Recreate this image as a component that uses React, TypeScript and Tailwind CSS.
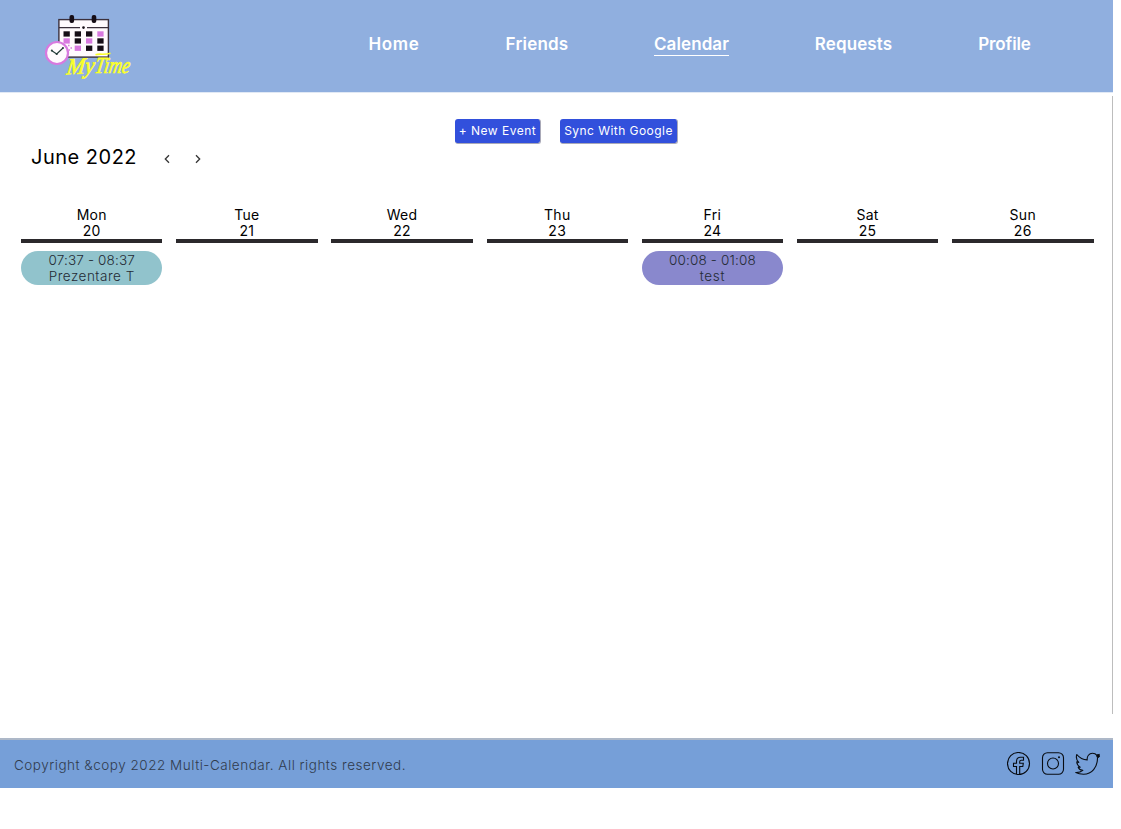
import React from 'react';

const nav = [
  { label: 'Home', box: 'w-[52px] tracking-[0.7px]' },
  { label: 'Friends', box: 'w-[62px] tracking-[0.2px]' },
  { label: 'Calendar', box: 'w-[75px] tracking-[0.1px]', active: true },
  { label: 'Requests', box: 'w-[77px] tracking-[0.1px]' },
  { label: 'Profile', box: 'w-[53px] tracking-[-0.1px]' },
];

const days = [
  { name: 'Mon', date: 20, event: { time: '07:37 - 08:37', title: 'Prezentare T', tone: 'bg-[#91c3cc]', spread: 'tracking-[0.5px]' } },
  { name: 'Tue', date: 21 },
  { name: 'Wed', date: 22 },
  { name: 'Thu', date: 23 },
  { name: 'Fri', date: 24, event: { time: '00:08 - 01:08', title: 'test', tone: 'bg-[#8988cd]', spread: 'tracking-[0.7px]' } },
  { name: 'Sat', date: 25 },
  { name: 'Sun', date: 26 },
];

const cells = [
  [63.5, 31.3, 0], [74.7, 31.3, 0], [86, 31.3, 0], [97.3, 31.3, 1],
  [63.5, 38.3, 1], [74.7, 38.3, 0], [86, 38.3, 1], [97.3, 38.3, 0],
  [74.7, 45.6, 1], [86, 45.6, 0], [97.3, 45.6, 0],
];

function Logo() {
  return (
    <svg width="110" height="84" viewBox="38 8 110 84" aria-label="My Time">
      <rect x="58.9" y="19.6" width="49.5" height="37.5" fill="#fffafd" stroke="#3b303c" strokeWidth="1.4" />
      <path d="M59 27.6H80M87 27.6H108" stroke="#3b303c" strokeWidth="1.2" />
      <circle cx="83.5" cy="27.6" r="1.3" fill="#160d16" />
      <rect x="69.5" y="15" width="4.600" height="8" rx="2" fill="#160d16" />
      <rect x="91.700" y="15" width="4.600" height="8" rx="2" fill="#160d16" />
      {cells.map(([x, y, pink]) => (
        <rect key={`${x}-${y}`} x={x} y={y} width="6.300" height="5.300" fill={pink ? '#d879df' : '#160d16'} />
      ))}
      <path d="M68 45.5h1.500M70.500 48h1.500M68.500 50h1.500" stroke="#d879df" strokeWidth="1.4" />
      <circle cx="57" cy="53" r="11" fill="#fffafd" stroke="#d879df" strokeWidth="2.200" />
      <path d="M51.500 50.500l5.200 3.500 6.600-6.200" fill="none" stroke="#263c3a" strokeWidth="1.2" />
      <g fill="#263c3a"><circle cx="51.800" cy="50.500" r="1" /><circle cx="56.700" cy="54" r="1.100" /><circle cx="63" cy="47.900" r="0.9" /></g>
      <g fill="#fbff28" stroke="#fbff28" strokeWidth="0.7" className="font-['Liberation_Serif',serif] text-[23px] italic">
        <text x="0" y="0" transform="translate(66 74.500) rotate(-3) skewX(-10)" textLength="28" lengthAdjust="spacingAndGlyphs">My</text>
        <text x="0" y="0" transform="translate(94 72.500) skewX(-10)" textLength="35" lengthAdjust="spacingAndGlyphs">Time</text>
      </g>
      <path d="M95.500 54.800c4-1.500 9 .4 15-1.600" fill="none" stroke="#fbff28" strokeWidth="1.600" />
    </svg>
  );
}

function Facebook() {
  return (
    <svg width="24" height="24" viewBox="0 0 24 24" fill="none" stroke="#080c12" strokeWidth="1.1">
      <circle cx="11.500" cy="11.500" r="11" />
      <path d="M9.500 22.200v-7.700H6.500v-3.200h3v-2c0-2.700 1.500-4.100 4-4.100h3v3h-2.200c-1.100 0-1.600.5-1.600 1.500v1.600h3.600l-.500 3.200h-3.100v7.700" />
    </svg>
  );
}

function Instagram() {
  return (
    <svg width="24" height="24" viewBox="0 0 24 24" fill="none" stroke="#080c12" strokeWidth="1.1">
      <rect x="1.500" y="0.700" width="21" height="21.600" rx="5" />
      <circle cx="12" cy="11.500" r="5.500" />
      <circle cx="18" cy="5.300" r="1" fill="#080c12" stroke="none" />
    </svg>
  );
}

function Twitter() {
  return (
    <svg width="26" height="24" viewBox="0 0 26 24" fill="none" stroke="#080c12" strokeWidth="1.1" strokeLinejoin="round">
      <path d="M1.800 2.500c3 3.700 6.300 5.300 10.400 5.400C11.800 4.500 14 1.200 17.500 1.200c2 0 3.500.9 4.400 2.100l2.300-.9-.8 1.700h1.100l-2 1.800C22.400 15.500 17 22.300 8.500 22.300c-3.300 0-5.700-.600-7.700-1.700 3 .1 5.300-.7 7-2.200-2.400-.2-3.900-1.500-4.600-3.200h2C3 13.800 1.800 12.100 1.800 9.800l2 .6C1.500 8.200.9 5.200 1.800 2.500Z" />
      <circle cx="22.900" cy="4" r="1.100" fill="#080c12" />
    </svg>
  );
}

function Chevron({ d }: { d: string }) {
  return (
    <button aria-label="Change week" className="flex h-3 w-2 items-center justify-center">
      <svg width="8" height="12" viewBox="0 0 8 12" fill="none" stroke="#353535" strokeWidth="1.3"><path d={d} /></svg>
    </button>
  );
}

export default function App() {
  return (
    <div className="h-[829px] w-full overflow-hidden bg-white font-[Inter,sans-serif] text-black">
      <div className="w-[1113px]">
        <header className="flex h-[93px] border-b border-[#e1e9f5] bg-[#90afdf]">
          <div className="ml-[38px] mt-2 w-[330px] shrink-0"><Logo /></div>
          <nav className="flex gap-[86px] pt-[32px]">
            {nav.map((item) => (
              <a
                key={item.label}
                className={`flex h-6 justify-center whitespace-nowrap text-[17px] font-semibold leading-[24px] text-white ${item.box} ${item.active ? 'border-b border-white' : ''}`}
              >{item.label}</a>
            ))}
          </nav>
        </header>

        <main className="mt-[3px] h-[618px] border-r border-[#bdbdbd] pt-[23px]">
          <div className="ml-[455px] flex h-[25px] gap-[19px] text-[12px] font-normal text-white">
            <button className="h-[25px] w-[86px] whitespace-nowrap rounded-[3px] border-b border-r border-[#a9a9b8] bg-[#3250dc] bg-clip-padding tracking-[0.5px]">+ New Event</button>
            <button className="h-[25px] w-[118px] whitespace-nowrap rounded-[3px] border-b border-r border-[#a9a9b8] bg-[#3250dc] bg-clip-padding tracking-[0.45px]">Sync With Google</button>
          </div>
          <div className="ml-[31px] flex h-[27px] items-center">
            <h1 className="w-[132px] whitespace-nowrap text-[20px] leading-[27px] tracking-[0.5px]">June 2022</h1>
            <div className="flex gap-[23px] pt-[2px]">
              <Chevron d="M6 2.200L2.300 6L6 9.800" />
              <Chevron d="M2 2.200L5.700 6L2 9.800" />
            </div>
          </div>
          <div className="ml-[21px] mt-[36px] grid w-[1072.500px] grid-cols-7 gap-x-[13.700px] text-center text-[14px] leading-4">
            {days.map((day) => (
              <section key={day.name}>
                <div className="flex h-[36px] flex-col border-b-4 border-[#2b292c] tracking-[0.3px]">
                  <span>{day.name}</span>
                  <span>{day.date}</span>
                </div>
                {day.event && (
                  <div className={`mt-2 h-[34px] rounded-full pt-px text-[13.500px] font-light text-[#242b35] ${day.event.tone}`}>
                    <div className="tracking-[0.150px]">{day.event.time}</div>
                    <div className={day.event.spread}>{day.event.title}</div>
                  </div>
                )}
              </section>
            ))}
          </div>
        </main>

        <footer className="mt-6 flex h-[50px] items-center justify-between border-t-2 border-[#adb8c8] bg-[#769fd8] pl-[14px] pr-[12px]">
          <p className="whitespace-nowrap pt-0.5 text-[13.500px] font-light tracking-[0.510px] text-[#303b4d]">Copyright &amp;copy 2022 Multi-Calendar. All rights reserved.</p>
          <div className="flex items-center gap-[10px]"><Facebook /><Instagram /><Twitter /></div>
        </footer>
      </div>
    </div>
  );
}
